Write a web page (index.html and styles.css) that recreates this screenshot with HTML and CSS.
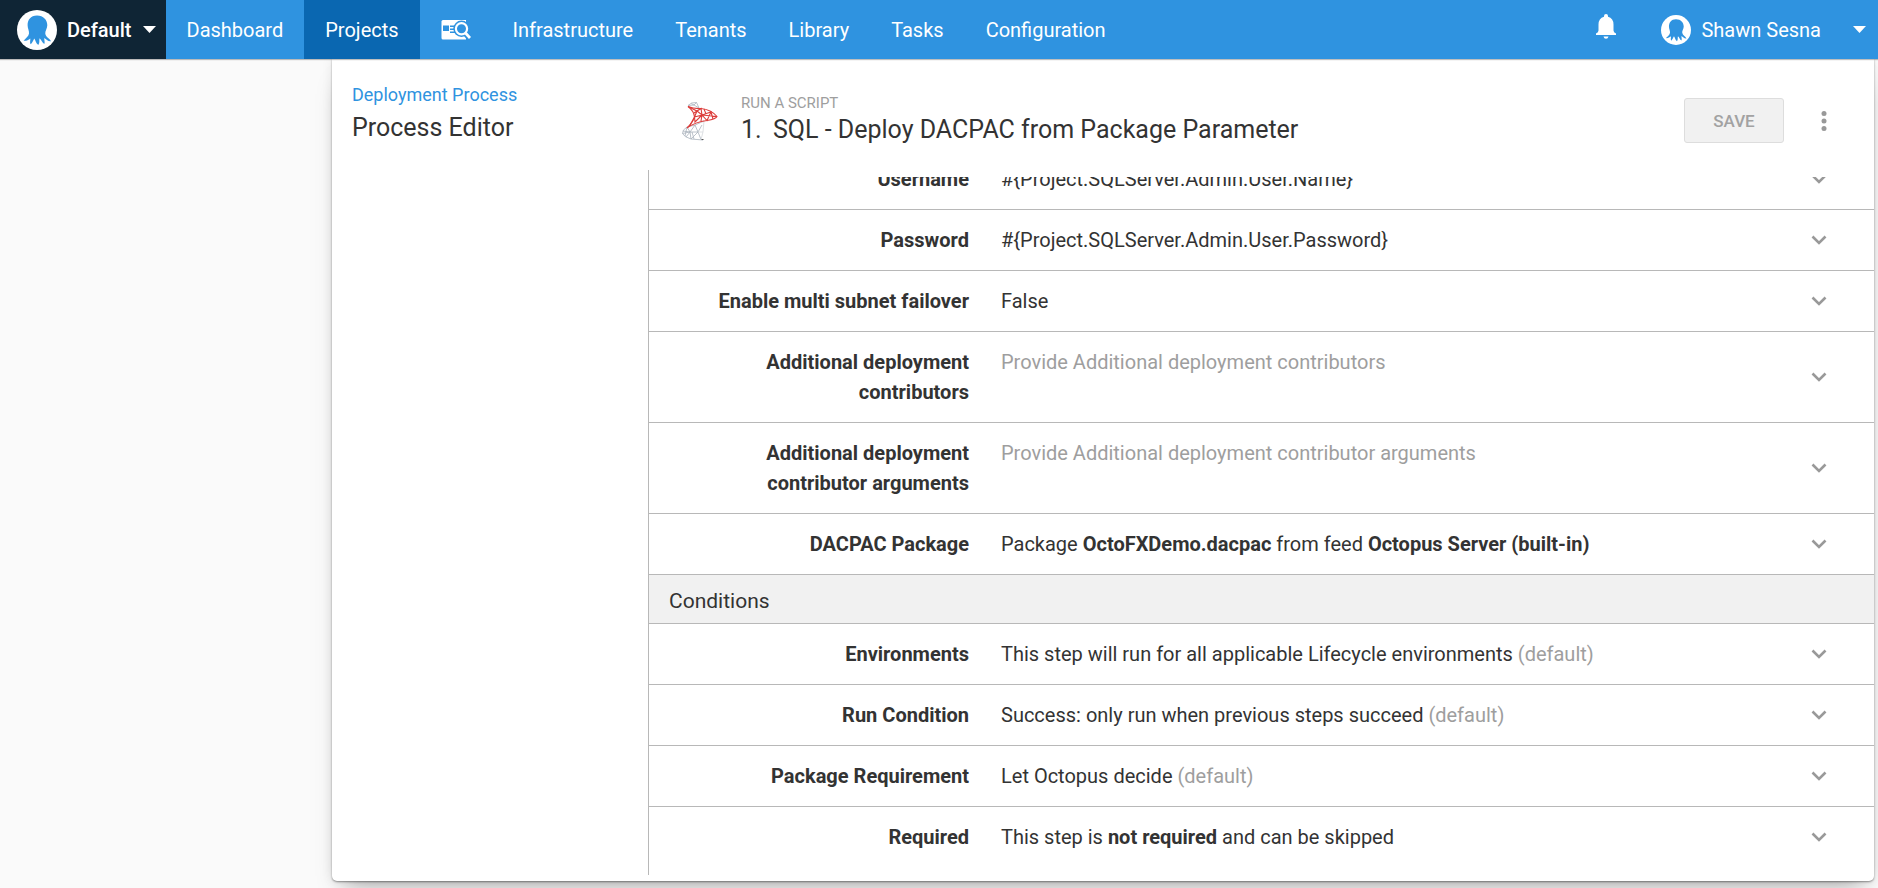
FILE: index.html
```html
<!DOCTYPE html>
<html lang="en">
<head>
<meta charset="utf-8">
<title>Process Editor</title>
<link rel="stylesheet" href="styles.css">
</head>
<body>
<svg class="defs" aria-hidden="true">
  <symbol id="octopus" viewBox="0 0 40 40">
    <path d="M20 5.500C13.500 5.500 10.600 10 10.600 15.300C10.600 18.500 12.300 20.800 12 23.500C11.600 26.500 9.200 27.600 6.600 30.800C9.200 31.200 11.300 29.800 13.300 28.400C13.500 30.300 12.600 32 13.500 34.200C15.400 33.200 15.900 30.500 17.300 28.400C18.600 30.200 18.700 32.800 21.300 35C23 32.800 21.900 30.400 22.600 28.200C24.600 29.900 25 32.600 27.300 34C28.300 32 27 29.800 27.300 28C29.300 29.200 31 31.700 34 31.200C32.600 28.300 28.900 27.200 28.300 23.700C27.900 21 30.300 18.700 30.300 15.300C30.300 10 26.500 5.500 20 5.500Z"/>
  </symbol>
  <symbol id="chevron" viewBox="0 0 16 10"><path d="M1.500 1.500L8 8L14.500 1.500" fill="none" stroke="#999" stroke-width="2.600"/></symbol>
</svg>

<header class="topbar">
  <button class="space" type="button">
    <svg class="space-logo" viewBox="0 0 40 40" aria-hidden="true"><circle cx="20" cy="20" r="20" fill="#fff"/><use href="#octopus" fill="#2f93e0"/></svg>
    Default
    <svg class="caret" viewBox="0 0 13 7" aria-hidden="true"><path d="M0 0H13L6.500 7Z"/></svg>
  </button>
  <nav class="nav">
    <a href="#">Dashboard</a>
    <a href="#" class="active" aria-current="page">Projects</a>
    <a href="#" class="nav-icon" aria-label="Project search">
      <svg viewBox="0 0 30 22" aria-hidden="true">
        <path d="M2 1H25V20.500H2Q.500 20.500 .500 19V2.500Q.500 1 2 1Z" fill="#fff"/>
        <path d="M2 6.500H8V12H2ZM9 6.500H15V8H9ZM9 9.500H15V11H9ZM9 12.500H15V14H9Z" fill="#2f93e0"/>
        <circle cx="20.500" cy="9.800" r="8.200" fill="#2f93e0"/>
        <path d="M24.500 14L29 19.500" stroke="#2f93e0" stroke-width="6"/>
        <circle cx="20.500" cy="9.800" r="5.600" fill="none" stroke="#fff" stroke-width="2.200"/>
        <path d="M24.500 14L29 19" stroke="#fff" stroke-width="2.800"/>
      </svg>
    </a>
    <a href="#">Infrastructure</a>
    <a href="#">Tenants</a>
    <a href="#">Library</a>
    <a href="#">Tasks</a>
    <a href="#">Configuration</a>
  </nav>
  <div class="account">
    <button class="bell" type="button" aria-label="Notifications">
      <svg viewBox="0 0 20 25" aria-hidden="true"><path d="M10 0Q12 0 12 2V2.800Q17.500 4.500 17.500 10.500V16.500Q17.500 18.500 20 19.500V21H0V19.500Q2.500 18.500 2.500 16.500V10.500Q2.500 4.500 8 2.800V2Q8 0 10 0ZM7.500 22.500H12.500Q12 24.800 10 24.800T7.500 22.500Z"/></svg>
    </button>
    <button class="user" type="button">
      <svg class="avatar" viewBox="0 0 40 40" aria-hidden="true"><circle cx="20" cy="20" r="20" fill="#fff"/><use href="#octopus" fill="#2f93e0"/></svg>
      <span class="user-name">Shawn Sesna</span>
      <svg class="caret" viewBox="0 0 13 7" aria-hidden="true"><path d="M0 0H13L6.500 7Z"/></svg>
    </button>
  </div>
</header>

<main class="card">
  <aside class="side">
    <a class="crumb" href="#">Deployment Process</a>
    <h1 class="title">Process Editor</h1>
  </aside>

  <section class="editor">
    <header class="step">
      <svg class="step-logo" viewBox="0 0 36 40" aria-hidden="true">
        <g fill="none" stroke="#a9b2bc" stroke-width=".800">
          <path d="M6 4.500Q9 1 14.500 1.500L17 7M6 4.500L12 4L17 7M9 2.500L12 4L14.500 1.500"/>
          <path d="M5 26Q0 29 .500 32.500Q2 36 9 38L21 39M5 26L13 24L22 20M5 26L8 31L.500 32.500M8 31L13 24L16 31L8 31L9 38L16 31L19 38.500M5 26L3 35M16 31L20 24M1 30L8 31L4 36M12 38L10 31"/>
          <path d="M17 22L22 20L21 31L19 38.500M16 31L21 31" stroke="#d5d9dd"/>
        </g>
        <g fill="none" stroke="#dc3c3a" stroke-width="1.100">
          <path d="M6 5.500Q12 8 19 7.500Q29 8.500 35 15.500Q34 18 25 19.500Q13 21 5 27Q12 20 12.500 16Q12 10 6 5.500Z"/>
          <path d="M6 5.500L15 10L19 7.500L20 14L12.500 16L15 10L20 14L29 11L25 19.500L20 14L13 21L12.500 16L8 24M20 14L35 15.500M29 11L31 18M15 10L12 12M20 14L19 20M22 8L24 13"/>
        </g>
        <path d="M19.500 38H21.500V39H19.500Z" fill="#555"/>
      </svg>
      <div class="step-text">
        <p class="step-kind">RUN A SCRIPT</p>
        <h2 class="title"><span class="step-number">1.</span>SQL - Deploy DACPAC from Package Parameter</h2>
      </div>
      <button class="save" type="button" disabled>SAVE</button>
      <button class="more" type="button" aria-label="More actions">
        <svg viewBox="0 0 6 20" aria-hidden="true"><circle cx="3" cy="2.500" r="2.500"/><circle cx="3" cy="10" r="2.500"/><circle cx="3" cy="17.500" r="2.500"/></svg>
      </button>
    </header>

    <div class="pane">
      <div class="rows">
        <div class="row"><strong class="label">Username</strong><div class="value">#{Project.SQLServer.Admin.User.Name}</div><button class="expand" type="button" aria-label="Expand Username"><svg aria-hidden="true"><use href="#chevron"/></svg></button></div>
        <div class="row"><strong class="label">Password</strong><div class="value">#{Project.SQLServer.Admin.User.Password}</div><button class="expand" type="button" aria-label="Expand Password"><svg aria-hidden="true"><use href="#chevron"/></svg></button></div>
        <div class="row"><strong class="label">Enable multi subnet failover</strong><div class="value">False</div><button class="expand" type="button" aria-label="Expand Enable multi subnet failover"><svg aria-hidden="true"><use href="#chevron"/></svg></button></div>
        <div class="row"><strong class="label">Additional deployment contributors</strong><div class="value muted">Provide Additional deployment contributors</div><button class="expand" type="button" aria-label="Expand Additional deployment contributors"><svg aria-hidden="true"><use href="#chevron"/></svg></button></div>
        <div class="row"><strong class="label">Additional deployment contributor arguments</strong><div class="value muted">Provide Additional deployment contributor arguments</div><button class="expand" type="button" aria-label="Expand Additional deployment contributor arguments"><svg aria-hidden="true"><use href="#chevron"/></svg></button></div>
        <div class="row"><strong class="label">DACPAC Package</strong><div class="value">Package <strong>OctoFXDemo.dacpac</strong> from feed <strong>Octopus Server (built-in)</strong></div><button class="expand" type="button" aria-label="Expand DACPAC Package"><svg aria-hidden="true"><use href="#chevron"/></svg></button></div>
        <h3 class="group">Conditions</h3>
        <div class="row"><strong class="label">Environments</strong><div class="value">This step will run for all applicable Lifecycle environments <span class="muted">(default)</span></div><button class="expand" type="button" aria-label="Expand Environments"><svg aria-hidden="true"><use href="#chevron"/></svg></button></div>
        <div class="row"><strong class="label">Run Condition</strong><div class="value">Success: only run when previous steps succeed <span class="muted">(default)</span></div><button class="expand" type="button" aria-label="Expand Run Condition"><svg aria-hidden="true"><use href="#chevron"/></svg></button></div>
        <div class="row"><strong class="label">Package Requirement</strong><div class="value">Let Octopus decide <span class="muted">(default)</span></div><button class="expand" type="button" aria-label="Expand Package Requirement"><svg aria-hidden="true"><use href="#chevron"/></svg></button></div>
        <div class="row"><strong class="label">Required</strong><div class="value">This step is <strong>not required</strong> and can be skipped</div><button class="expand" type="button" aria-label="Expand Required"><svg aria-hidden="true"><use href="#chevron"/></svg></button></div>
      </div>
    </div>
  </section>
</main>
</body>
</html>
```
FILE: styles.css
```css
* { box-sizing: border-box; }

body {
  margin: 0;
  height: 100vh;
  display: flex;
  flex-direction: column;
  overflow: hidden;
  background: #fafafa;
  color: #333;
  font: 20px/30px Roboto, "Liberation Sans", sans-serif;
}

h1, h2, h3, p { margin: 0; font-weight: 400; }
button { padding: 0; border: 0; background: none; color: inherit; font: inherit; }
a { text-decoration: none; }
strong { font-weight: 700; }
svg { display: block; flex: none; }
.defs { position: absolute; width: 0; height: 0; }
.muted { color: #9e9e9e; }

.topbar {
  position: relative;
  z-index: 1;
  flex: none;
  display: flex;
  height: 59px;
  background: #2f93e0;
  color: #fff;
  fill: #fff;
  box-shadow: 0 1px 1px rgba(0, 0, 0, .25);
}
.space {
  display: flex;
  align-items: center;
  padding: 0 10px 0 17px;
  background: #0f2535;
  font-weight: 500;
}
.space-logo { width: 40px; height: 40px; margin-right: 10px; }
.caret { width: 13px; height: 7px; margin-left: 11px; }
.nav { display: flex; }
.nav a { display: flex; align-items: center; padding: 0 21px; color: inherit; }
.nav .active { background: #0a67b1; }
.nav-icon svg { width: 30px; height: 22px; }
.account { display: flex; align-items: center; margin-left: auto; padding-right: 12px; }
.bell { margin-right: 45px; padding-bottom: 6px; }
.bell svg { width: 20px; height: 25px; }
.user { display: flex; align-items: center; }
.avatar { width: 30px; height: 30px; margin-right: 10px; }
.user .caret { margin-left: 32px; }

.card {
  flex: 1;
  min-height: 0;
  display: flex;
  margin: 0 4px 7px 332px;
  padding-bottom: 6px;
  background: #fff;
  border-radius: 0 0 5px 5px;
  box-shadow: 0 1px 2px rgba(0, 0, 0, .4), 0 15px 24px -12px rgba(0, 0, 0, .35), 0 0 12px rgba(0, 0, 0, .08);
}
.side { flex: none; width: 316px; padding: 21px 20px; }
.crumb { display: block; color: #2f93e0; font-size: 18px; line-height: 30px; }
.title { font-size: 25px; line-height: 36px; }

.editor { flex: 1; min-width: 0; display: flex; flex-direction: column; }
.step { flex: none; display: flex; align-items: center; height: 111px; padding: 12px 47px 0 34px; }
.step-logo { width: 36px; height: 40px; margin-right: 23px; }
.step-text { flex: 1; }
.step-kind { color: #9e9e9e; font-size: 15px; line-height: 18px; }
.step-number { display: inline-block; width: 32px; }
.save {
  width: 100px;
  height: 45px;
  border: 1px solid #ddd;
  border-radius: 3px;
  background: #f1f1f1;
  color: #a2a2a2;
  font-size: 17px;
  font-weight: 500;
}
.more { margin-left: 37px; fill: #999; }
.more svg { width: 6px; height: 20px; }

.pane { flex: 1; min-height: 0; display: flex; padding-top: 7px; border-left: 1px solid #b8b8b8; }
/* The list is scrolled to its end. */
.rows {
  flex: 1;
  display: flex;
  flex-direction: column;
  justify-content: flex-end;
  padding-bottom: 7px;
  overflow: hidden;
}
.row {
  flex: none;
  display: grid;
  grid-template-columns: 300px 1fr 40px;
  column-gap: 32px;
  align-items: start;
  padding: 15px 35px 15px 20px;
  border-bottom: 1px solid #b8b8b8;
}
.row:last-child { border-bottom-color: transparent; }
.label { text-align: right; }
.expand { align-self: center; justify-self: center; }
.expand svg { width: 16px; height: 10px; }
.group {
  flex: none;
  height: 49px;
  padding: 11px 20px 7px;
  border-bottom: 1px solid #b8b8b8;
  background: #f1f1f1;
  font-size: 21px;
}
```
